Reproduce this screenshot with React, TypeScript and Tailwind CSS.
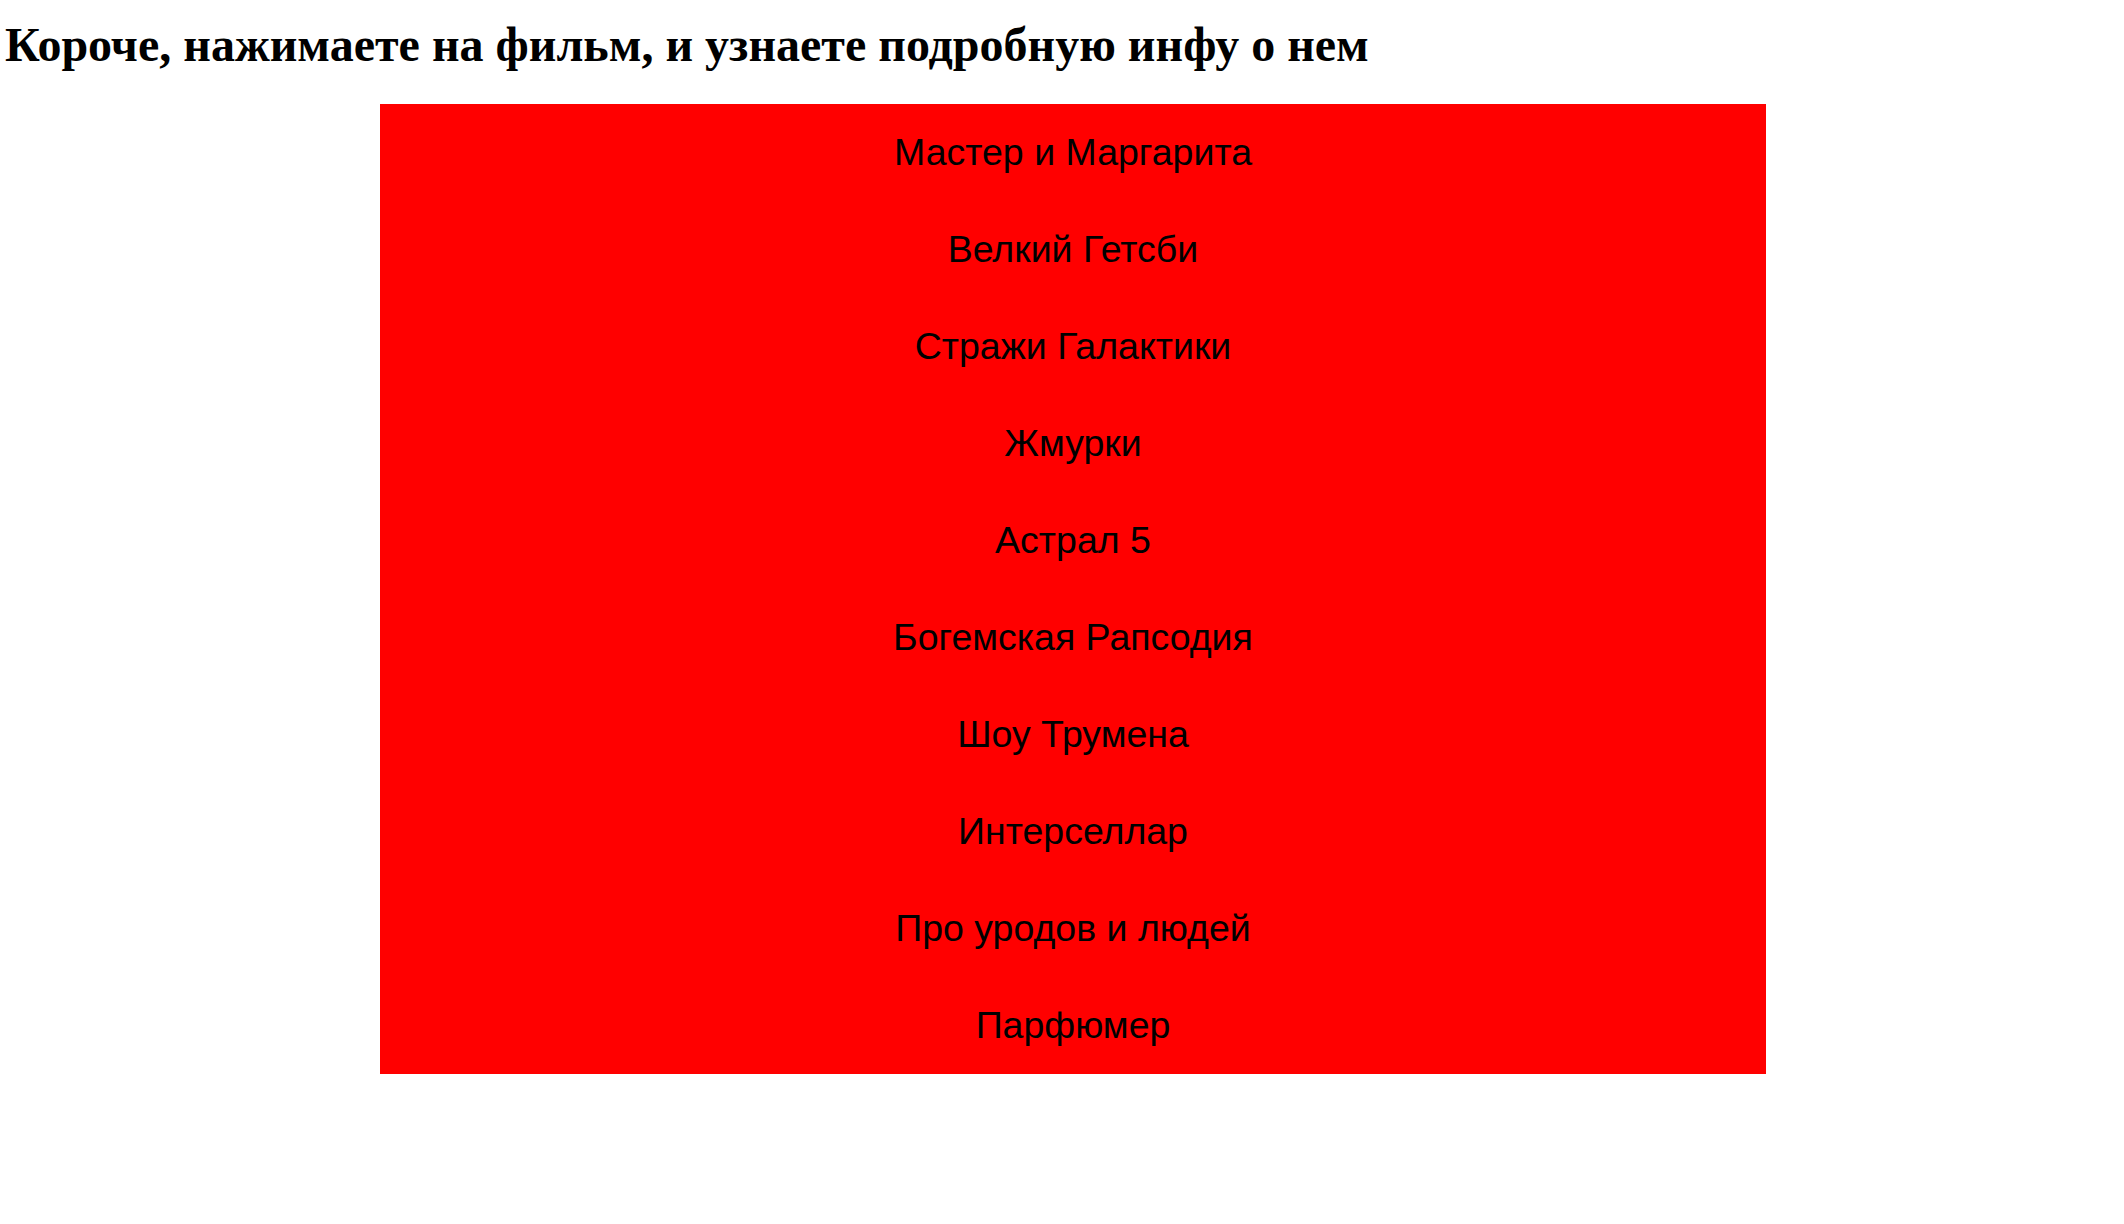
import React from 'react';

const films = [
    "Мастер и Маргарита",
    "Велкий Гетсби",
    "Стражи Галактики",
    "Жмурки",
    "Астрал 5",
    "Богемская Рапсодия",
    "Шоу Трумена",
    "Интерселлар",
    "Про уродов и людей",
    "Парфюмер",
];

const App: React.FC = () => {
    return (
        <div className="min-h-screen bg-white text-black">
            <h1 className="pt-[18px] pl-[5px] text-[48px] font-bold leading-[53px] font-['Liberation_Serif',serif]">
                Короче, нажимаете на фильм, и узнаете подробную инфу о нем
            </h1>

            <div className="ml-[380px] mt-[33px] w-[1386px] bg-[#ff0000]">
                {films.map((film, i) => (
                    <div
                        key={i}
                        className="h-[97px] flex items-center justify-center text-[37.5px] font-['Liberation_Sans',Arial,sans-serif] cursor-pointer"
                    >
                        {film}
                    </div>
                ))}
            </div>
        </div>
    );
};

export default App;
